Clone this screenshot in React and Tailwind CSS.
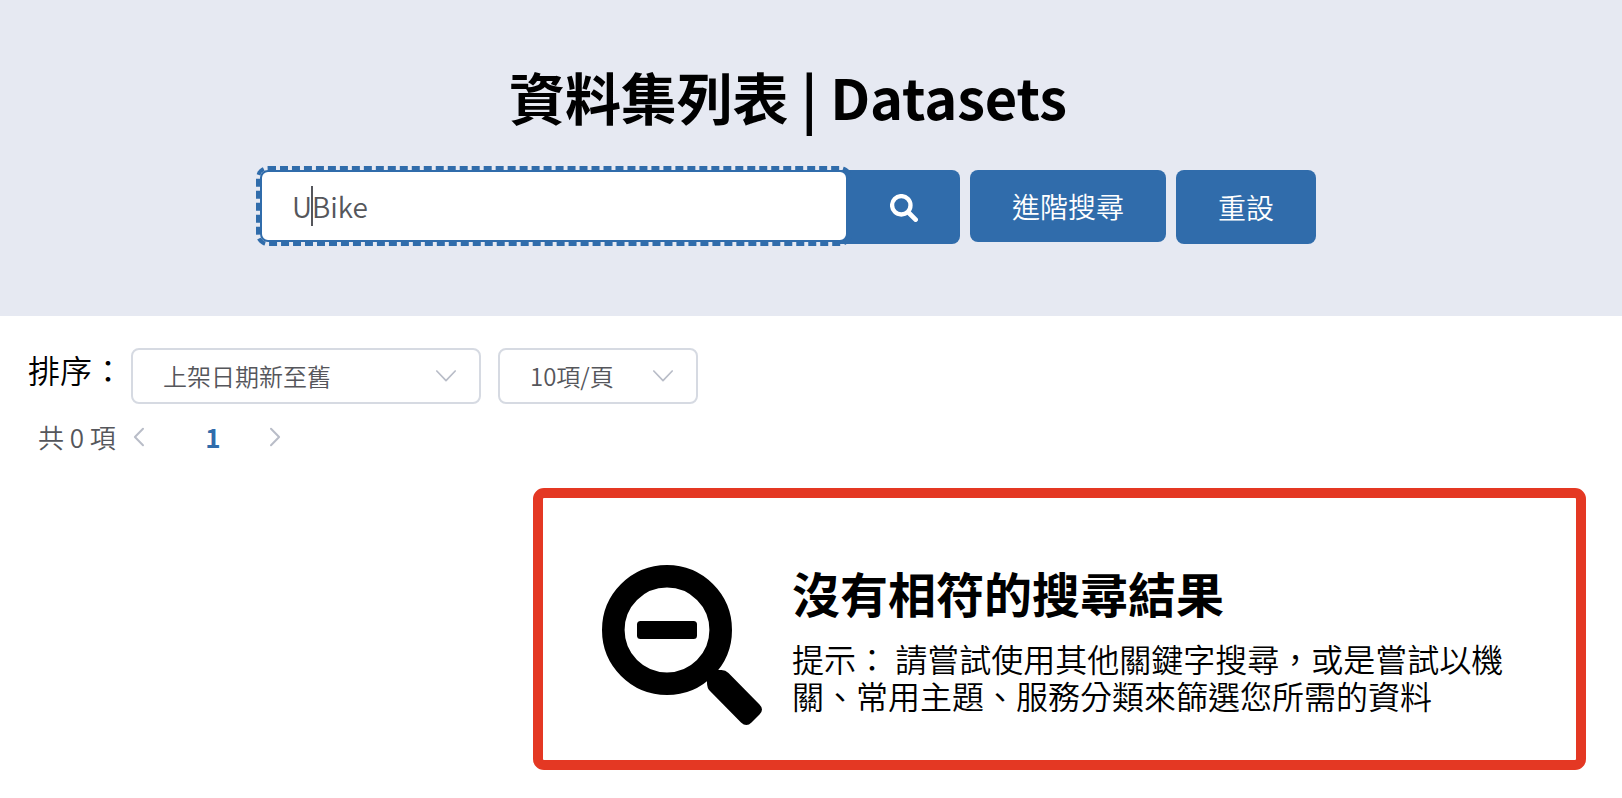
function ChevronDown() {
  return (
    <svg className="h-5 w-5" viewBox="0 0 20 20" fill="none" stroke="#b9bdc8" strokeWidth="1.7" strokeLinecap="round" strokeLinejoin="round">
      <path d="M.8 5 10 14.700l9.200-9.700" />
    </svg>
  );
}

function ChevronSide({ flip }) {
  return (
    <svg className={flip ? "h-5 w-3 rotate-180" : "h-5 w-3"} viewBox="0 0 12 20" fill="none" stroke="#b9bdc8" strokeWidth="2" strokeLinecap="round" strokeLinejoin="round">
      <path d="M10 1.800 1.900 10l8.100 8.200" />
    </svg>
  );
}

function SearchIcon() {
  return (
    <svg className="h-7 w-7" viewBox="0 0 28 28" fill="none" stroke="#fff">
      <circle cx="11.300" cy="11.300" r="9.200" strokeWidth="4.300" />
      <path d="m19 19 6.600 6.600" strokeWidth="4.700" strokeLinecap="round" />
    </svg>
  );
}

function ZoomOutIcon() {
  return (
    <svg className="h-40 w-40 shrink-0" viewBox="0 0 160 160">
      <circle cx="65" cy="65" r="53.700" fill="none" stroke="#000" strokeWidth="22.600" />
      <rect x="35" y="56" width="60" height="18" rx="3.500" />
      <path d="M105 118v-5l9-8h5.500q4 0 7 3l31 31.500q5 5 0 10l-8 8q-5 5-10.500 0l-31-31.500q-3-3-3-8Z" />
    </svg>
  );
}

function Select({ label, className }) {
  return (
    <div className={"flex h-14 items-center justify-between rounded-lg border-2 border-[#d6dae2] pl-[30px] text-2xl text-[#55565b] " + className}>
      <span>{label}</span>
      <ChevronDown />
    </div>
  );
}

export default function App() {
  return (
    <div className="h-[798px] w-[1622px] overflow-hidden bg-white font-['Noto_Sans_CJK_TC',sans-serif] font-[350] text-black" lang="zh-Hant">
      <header className="flex h-[316px] flex-col items-center bg-[#e6e9f2] pt-14 pr-[46px]">
        <h1 className="text-[56px] leading-[80px] font-bold tracking-[-0.1px] whitespace-nowrap">資料集列表 | Datasets</h1>
        <div className="mt-[34px] flex items-start text-[28px]">
          <div className="z-10 flex h-[72px] w-[588px] items-center rounded-lg border-2 border-[#306cab] bg-white pl-[30px] leading-10 text-[#55565b] outline-4 outline-[#306cab] outline-dashed">
            <span>U</span>
            <span className="-mr-px -ml-px h-10 w-0.5 bg-[#55565b]" />
            <span>Bike</span>
          </div>
          <button className="-ml-2 flex h-[74px] w-[120px] items-center justify-center rounded-r-lg bg-[#306cab] pt-0.5 pl-2">
            <SearchIcon />
          </button>
          <button className="ml-2.5 h-[72px] w-[196px] rounded-lg bg-[#306cab] leading-[72px] text-white">進階搜尋</button>
          <button className="ml-2.5 h-[74px] w-[140px] rounded-lg bg-[#306cab] leading-[74px] text-white">重設</button>
        </div>
      </header>

      <div className="mt-8 flex h-14 pl-7">
        <span className="w-[103px] text-[32px] leading-[42px] whitespace-nowrap">排序：</span>
        <Select label="上架日期新至舊" className="w-[350px] pr-[23px]" />
        <Select label="10項/頁" className="ml-[17px] w-[200px] pr-[23px]" />
      </div>

      <nav className="mt-2.5 flex h-[46px] items-center pl-[38px] text-[26px] text-[#55565b]">
        <span className="w-[95px] pb-0.5 whitespace-nowrap">共 0 項</span>
        <ChevronSide />
        <span className="mr-12 ml-[60px] w-4 pb-0.5 text-center font-bold text-[#306cab]">1</span>
        <ChevronSide flip />
      </nav>

      <section className="mt-7 ml-[533px] flex h-[282px] w-[1053px] rounded-[11px] border-10 border-[#e43823] pt-[67px] pl-[59px]">
        <ZoomOutIcon />
        <div className="-mt-[3px] ml-[30px] w-[720px]">
          <h2 className="text-5xl leading-[60px] font-bold">沒有相符的搜尋結果</h2>
          <p className="mt-[18px] text-[32px] leading-[37px]">提示： 請嘗試使用其他關鍵字搜尋，或是嘗試以機關、常用主題、服務分類來篩選您所需的資料</p>
        </div>
      </section>
    </div>
  );
}
